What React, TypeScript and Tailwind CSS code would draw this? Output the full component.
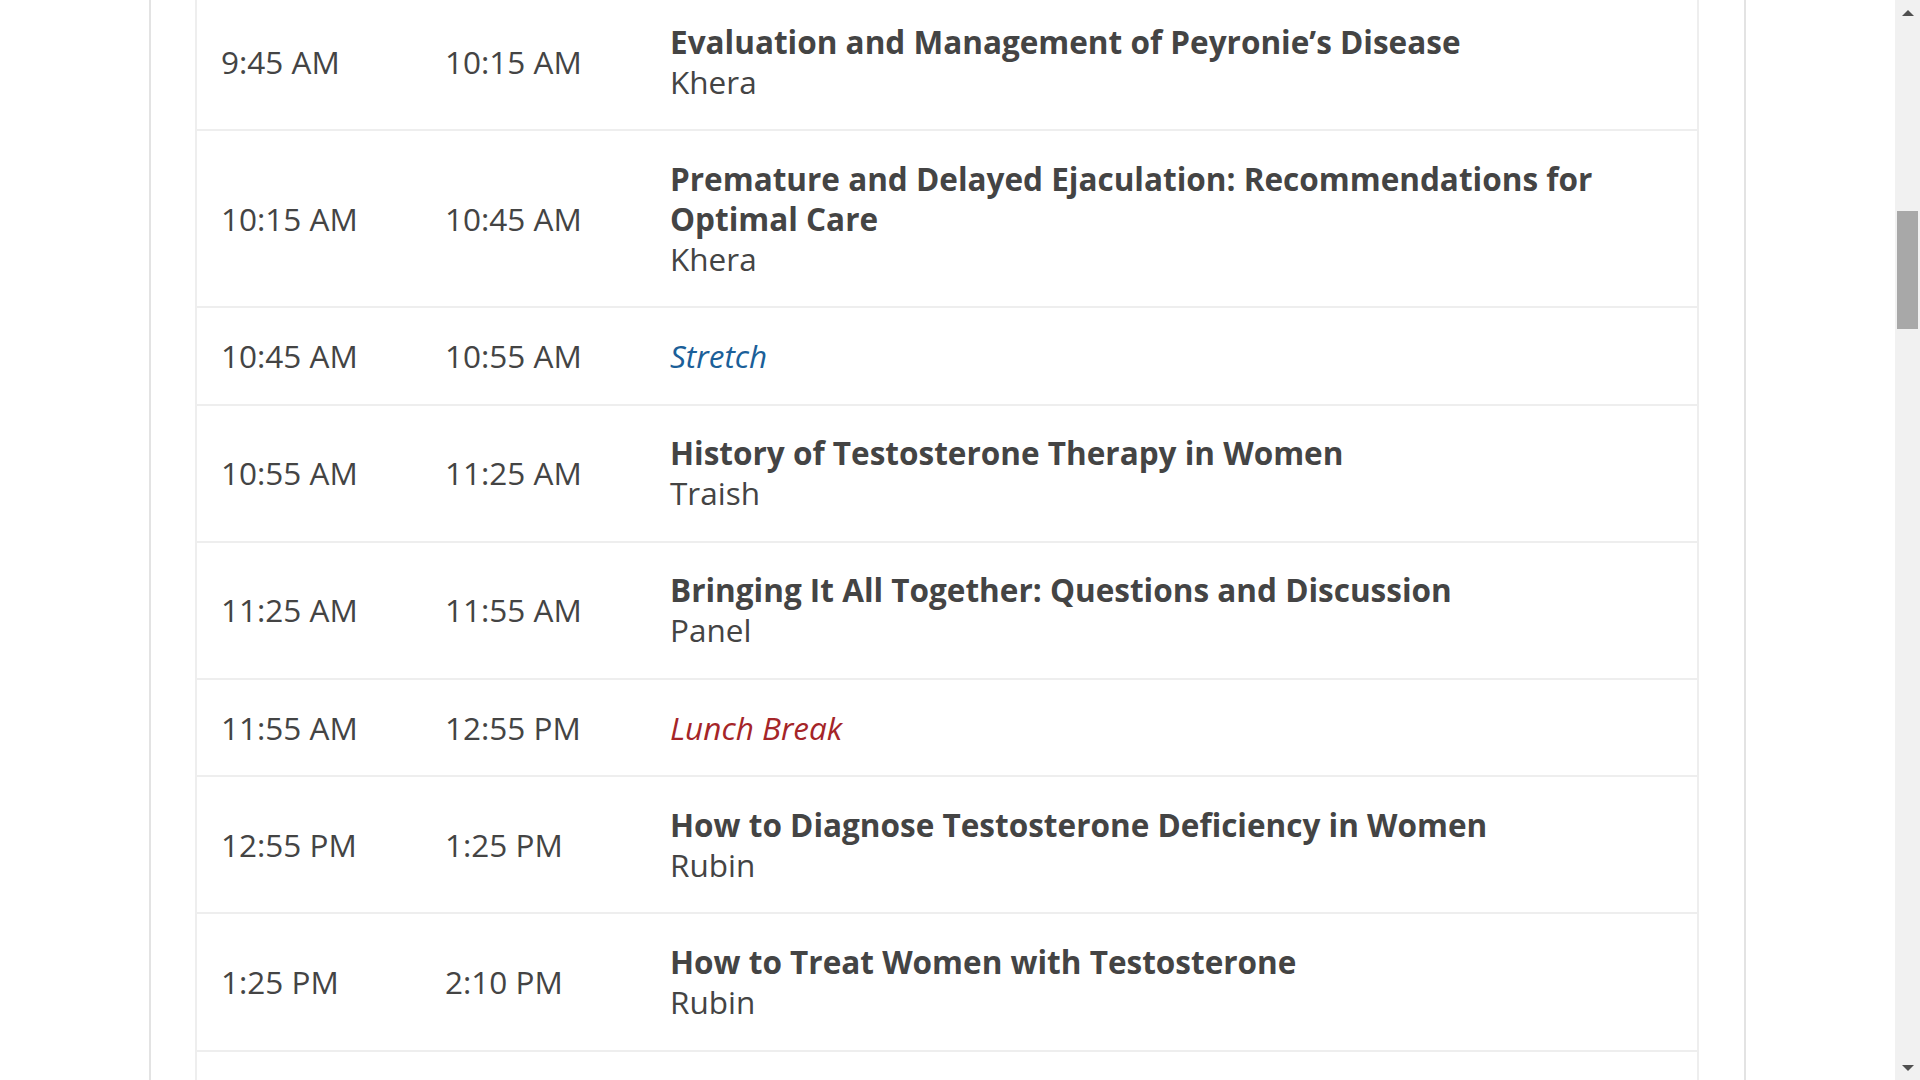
import React from "react";

type Session = {
  start: string;
  end: string;
  title: string;
  speaker?: string;
  kind?: "talk" | "stretch" | "lunch";
};

const sessions: Session[] = [
  { start: "9:45 AM", end: "10:15 AM", title: "Evaluation and Management of Peyronie’s Disease", speaker: "Khera" },
  { start: "10:15 AM", end: "10:45 AM", title: "Premature and Delayed Ejaculation: Recommendations for Optimal Care", speaker: "Khera" },
  { start: "10:45 AM", end: "10:55 AM", title: "Stretch", kind: "stretch" },
  { start: "10:55 AM", end: "11:25 AM", title: "History of Testosterone Therapy in Women", speaker: "Traish" },
  { start: "11:25 AM", end: "11:55 AM", title: "Bringing It All Together: Questions and Discussion", speaker: "Panel" },
  { start: "11:55 AM", end: "12:55 PM", title: "Lunch Break", kind: "lunch" },
  { start: "12:55 PM", end: "1:25 PM", title: "How to Diagnose Testosterone Deficiency in Women", speaker: "Rubin" },
  { start: "1:25 PM", end: "2:10 PM", title: "How to Treat Women with Testosterone", speaker: "Rubin" },
];

const Row: React.FC<{ s: Session }> = ({ s }) => (
  <div className="flex items-center border-b-2 border-[#eeeeee] pl-6 pr-6 py-[27.6px] text-[31.5px] leading-[40px] text-[#444444]">
    <div className="w-[224px] shrink-0">{s.start}</div>
    <div className="w-[225px] shrink-0">{s.end}</div>
    <div className="flex-1">
      {s.kind === "stretch" && <div className="italic text-[#1b5f99]">{s.title}</div>}
      {s.kind === "lunch" && <div className="italic text-[#a52528]">{s.title}</div>}
      {!s.kind && (
        <>
          <div className="font-bold">{s.title}</div>
          <div>{s.speaker}</div>
        </>
      )}
    </div>
  </div>
);

export default function App() {
  return (
    <div className="flex h-screen w-full overflow-hidden bg-white font-['Open_Sans',sans-serif] antialiased">
      <div className="flex flex-1 justify-center overflow-hidden">
        <div className="w-[1597px] shrink-0 overflow-hidden border-x-2 border-[#e3e3e3] pl-[44px] pr-[45px]">
          <div className="-mt-[6px] border-x-2 border-[#eeeeee]">
            {sessions.map((s) => (
              <Row key={s.start} s={s} />
            ))}
            {/* next row, scrolled below the fold */}
            <div className="h-[200px]" />
          </div>
        </div>
      </div>

      {/* scrollbar */}
      <div className="flex w-[25px] shrink-0 flex-col items-center bg-[#f1f1f1]">
        <div className="flex h-[25px] w-full items-center justify-center">
          <div className="h-0 w-0 border-x-[6px] border-b-[6px] border-x-transparent border-b-[#505050]" />
        </div>
        <div className="h-[186px]" />
        <div className="h-[118px] w-[21px] bg-[#a8a8a8]" />
        <div className="flex-1" />
        <div className="flex h-[25px] w-full items-center justify-center">
          <div className="h-0 w-0 border-x-[6px] border-t-[6px] border-x-transparent border-t-[#505050]" />
        </div>
      </div>
    </div>
  );
}
